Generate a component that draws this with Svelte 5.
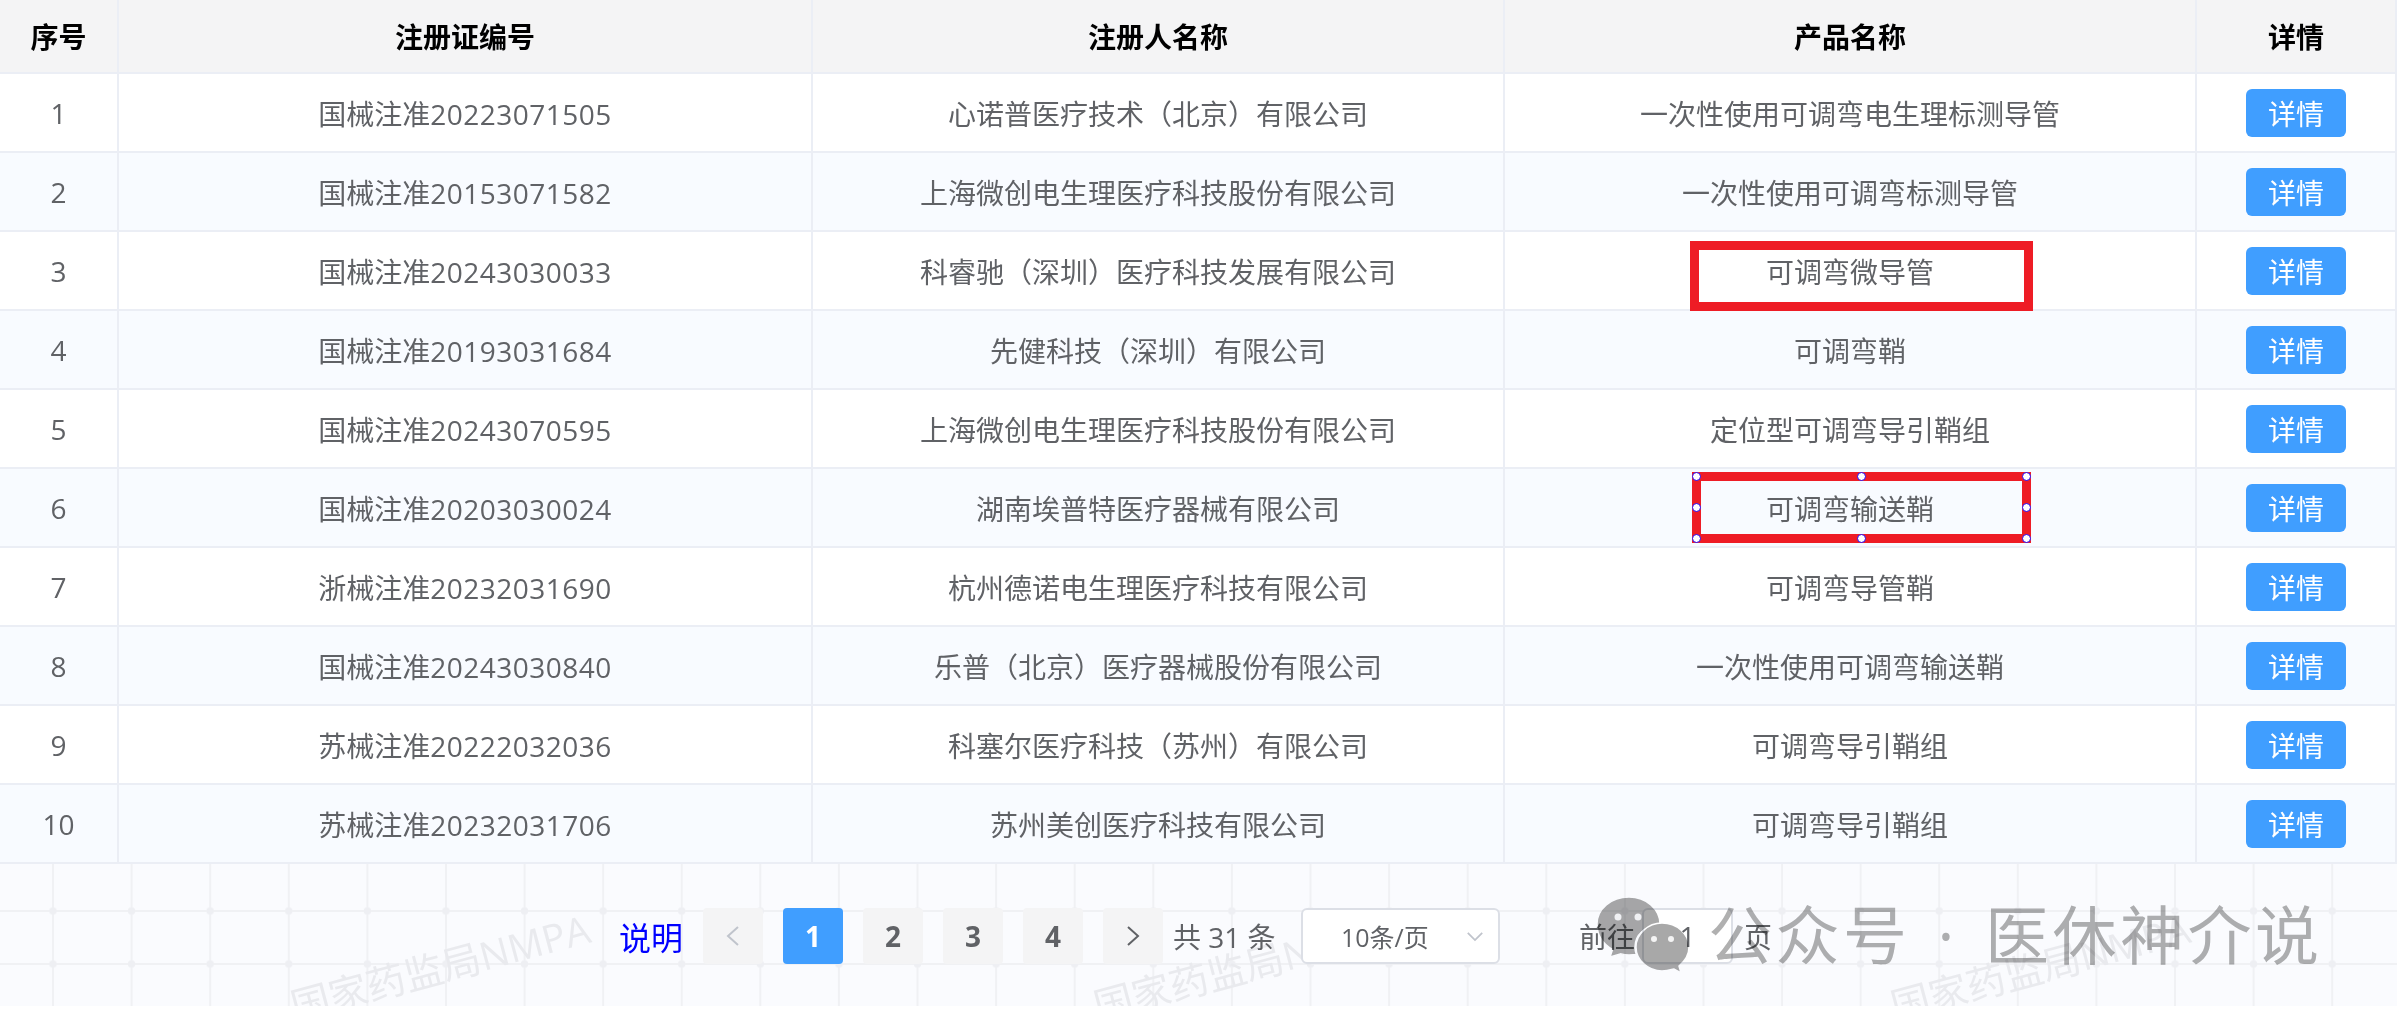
<script>
  const rows = [
    { prefix: '国械注准', code: '20223071505', owner: '心诺普医疗技术（北京）有限公司', product: '一次性使用可调弯电生理标测导管' },
    { prefix: '国械注准', code: '20153071582', owner: '上海微创电生理医疗科技股份有限公司', product: '一次性使用可调弯标测导管' },
    { prefix: '国械注准', code: '20243030033', owner: '科睿驰（深圳）医疗科技发展有限公司', product: '可调弯微导管', mark: 'plain' },
    { prefix: '国械注准', code: '20193031684', owner: '先健科技（深圳）有限公司', product: '可调弯鞘' },
    { prefix: '国械注准', code: '20243070595', owner: '上海微创电生理医疗科技股份有限公司', product: '定位型可调弯导引鞘组' },
    { prefix: '国械注准', code: '20203030024', owner: '湖南埃普特医疗器械有限公司', product: '可调弯输送鞘', mark: 'selected' },
    { prefix: '浙械注准', code: '20232031690', owner: '杭州德诺电生理医疗科技有限公司', product: '可调弯导管鞘' },
    { prefix: '国械注准', code: '20243030840', owner: '乐普（北京）医疗器械股份有限公司', product: '一次性使用可调弯输送鞘' },
    { prefix: '苏械注准', code: '20222032036', owner: '科塞尔医疗科技（苏州）有限公司', product: '可调弯导引鞘组' },
    { prefix: '苏械注准', code: '20232031706', owner: '苏州美创医疗科技有限公司', product: '可调弯导引鞘组' },
  ];
  const pages = [1, 2, 3, 4];
  const handles = ['tl', 'tc', 'tr', 'ml', 'mr', 'bl', 'bc', 'br'];
</script>

<div class="page">
  <table>
    <colgroup>
      <col class="c1" /><col class="c2" /><col class="c3" /><col class="c4" /><col />
    </colgroup>
    <thead>
      <tr>
        <th>序号</th>
        <th>注册证编号</th>
        <th>注册人名称</th>
        <th>产品名称</th>
        <th>详情</th>
      </tr>
    </thead>
    <tbody>
      {#each rows as row, i}
        <tr class:even={i % 2 === 1}>
          <td>{i + 1}</td>
          <td>{row.prefix}<span class="code">{row.code}</span></td>
          <td>{row.owner}</td>
          <td class="product">
            {#if row.mark}
              <div class="mark {row.mark}">
                {#if row.mark === 'selected'}
                  {#each handles as h}
                    <span class="handle {h}"></span>
                  {/each}
                {/if}
              </div>
            {/if}
            {row.product}
          </td>
          <td><button class="detail">详情</button></td>
        </tr>
      {/each}
    </tbody>
  </table>

  <div class="footer">
    <div class="stamps">
      <span class="stamp">国家药监局NMPA</span>
      <span class="stamp">国家药监局NMPA</span>
      <span class="stamp">国家药监局NMPA</span>
    </div>

    <div class="pager">
      <span class="help">说明</span>
      <button class="pg off" aria-label="上一页">
        <svg viewBox="0 0 16 24" width="16" height="24"><path d="M13 3 3 12l10 9" /></svg>
      </button>
      {#each pages as p}
        <button class="pg" class:active={p === 1}>{p}</button>
      {/each}
      <button class="pg" aria-label="下一页">
        <svg viewBox="0 0 16 24" width="16" height="24"><path d="m3 3 10 9-10 9" /></svg>
      </button>
      <span class="total">共 31 条</span>
      <div class="select">
        <span>10条/页</span>
        <svg viewBox="0 0 20 12" width="18" height="11"><path d="m2 2 8 8 8-8" /></svg>
      </div>
      <span class="goto">前往</span>
      <div class="jump">1</div>
      <span class="unit">页</span>
    </div>

    <div class="wechat">
      <svg viewBox="0 0 92 76" width="92" height="76">
        <path class="bubble" d="M32 0C49 0 63 12 63 27c0 1-.1 2-.2 3C48 28 38 38 38 50c0 3 .4 5 1.300 7.500-2.500.500-4.800.500-7.300.500-3 0-5.500-.400-8-1.100L13 60l2.500-7.500C6 47 0 38 0 27 0 12 14 0 32 0Z" />
        <circle class="eye" cx="21" cy="20" r="3.500" />
        <circle class="eye" cx="41" cy="20" r="3.500" />
        <path class="bubble" d="M65 26c15 0 27 11 27 24 0 8-4 14-10 19l2 7-7-4c-4 1-8 2-12 2-14 0-26-11-26-24s12-24 26-24Z" />
        <circle class="eye" cx="57" cy="42" r="3" />
        <circle class="eye" cx="74" cy="42" r="3" />
      </svg>
      <span class="wechat-name">公众号 · 医休神介说</span>
    </div>
  </div>
</div>

<style>
  :global(body) {
    background: #fff;
  }
  .page {
    width: 2397px;
    font-family: "Open Sans", "Noto Sans CJK SC", sans-serif;
    font-size: 28px;
    color: #606266;
  }
  table {
    width: 100%;
    table-layout: fixed;
    border-collapse: separate;
    border-spacing: 0;
  }
  .c1 { width: 119px; }
  .c2 { width: 694px; }
  .c3 { width: 692px; }
  .c4 { width: 692px; }
  th, td {
    padding: 0;
    text-align: center;
    border-right: 2px solid #ebeef5;
    border-bottom: 2px solid #ebeef5;
    box-sizing: border-box;
    height: 79px;
  }
  th {
    height: 74px;
    background: #f4f4f5;
    color: #000;
    font-weight: 700;
  }
  tr.even td {
    background: #f8fbff;
  }
  .code {
    letter-spacing: 0.5px;
  }
  .product {
    position: relative;
  }
  .detail {
    display: block;
    width: 100px;
    height: 48px;
    margin: 0 auto;
    padding: 0;
    border: none;
    border-radius: 6px;
    background: #409eff;
    color: #fff;
    font: inherit;
  }
  .mark {
    position: absolute;
    box-sizing: border-box;
    border: 9px solid #ee1c25;
  }
  .mark.plain {
    left: 185px;
    top: 9px;
    width: 343px;
    height: 70px;
  }
  .mark.selected {
    left: 187px;
    top: 3px;
    width: 339px;
    height: 71px;
  }
  .handle {
    position: absolute;
    width: 9px;
    height: 9px;
    box-sizing: border-box;
    border: 1.500px solid #2200ee;
    border-radius: 50%;
    background: #fff;
  }
  .tl, .tc, .tr { top: -9px; }
  .ml, .mr { top: 22px; }
  .bl, .bc, .br { bottom: -9px; }
  .tl, .ml, .bl { left: -9px; }
  .tc, .bc { left: 156px; }
  .tr, .mr, .br { right: -9px; }

  .footer {
    position: relative;
    height: 142px;
    box-sizing: border-box;
    padding: 44px 0 0 619px;
    overflow: hidden;
    background-color: #fafbfe;
    background-image:
      radial-gradient(circle, #eeeff3 3.500px, transparent 4px),
      linear-gradient(#f0f1f4 2px, transparent 2px),
      linear-gradient(90deg, #f0f1f4 2px, transparent 2px);
    background-size: 78.600px 53px;
    background-position: 13.700px 20.500px, 0 46px, 52px 0;
  }
  .stamps {
    position: absolute;
    inset: 0;
  }
  .stamp {
    position: absolute;
    top: 113px;
    white-space: nowrap;
    font-size: 39px;
    color: #e9eaee;
    transform: rotate(-15deg);
    transform-origin: left center;
  }
  .stamp:nth-child(1) { left: 291px; }
  .stamp:nth-child(2) { left: 1094px; }
  .stamp:nth-child(3) { left: 1891px; }
  .pager {
    position: relative;
    display: flex;
    align-items: center;
    height: 56px;
  }
  .help {
    margin-right: 20px;
    font-size: 32px;
    color: #0000ff;
  }
  .pg {
    display: flex;
    align-items: center;
    justify-content: center;
    width: 60px;
    height: 56px;
    margin-right: 20px;
    padding: 0;
    border: none;
    border-radius: 4px;
    background: #f4f4f5;
    color: #606266;
    font: inherit;
    font-weight: 700;
  }
  .pg svg path {
    fill: none;
    stroke: #606266;
    stroke-width: 2;
  }
  .pg.off svg path {
    stroke: #c0c4cc;
  }
  .pg.active {
    background: #409eff;
    color: #fff;
  }
  .pg:last-of-type {
    margin-right: 10px;
  }
  .total {
    width: 128px;
  }
  .select {
    display: flex;
    align-items: center;
    justify-content: space-between;
    box-sizing: border-box;
    width: 199px;
    height: 56px;
    padding: 0 14px 0 38px;
    border: 2px solid #dcdfe6;
    border-radius: 6px;
    background: #fff;
    font-size: 25px;
  }
  .select svg path {
    fill: none;
    stroke: #c0c4cc;
    stroke-width: 2;
  }
  .goto {
    margin-left: 79px;
  }
  .jump {
    box-sizing: border-box;
    width: 91px;
    height: 56px;
    margin-left: 7px;
    border: 2px solid #dcdfe6;
    border-radius: 6px;
    background: #fff;
    text-align: center;
    line-height: 52px;
  }
  .unit {
    margin-left: 11px;
  }
  .wechat {
    position: absolute;
    left: 1597px;
    top: 33px;
    display: flex;
    align-items: center;
    gap: 19px;
    mix-blend-mode: multiply;
  }
  .bubble {
    fill: #a8a8a8;
    stroke: #fff;
    stroke-width: 1.500;
  }
  .eye {
    fill: #f4f4f4;
  }
  .wechat-name {
    font-size: 64px;
    letter-spacing: 3.500px;
    word-spacing: 7px;
    line-height: 76px;
    color: #b0b0b0;
    white-space: nowrap;
  }
</style>
